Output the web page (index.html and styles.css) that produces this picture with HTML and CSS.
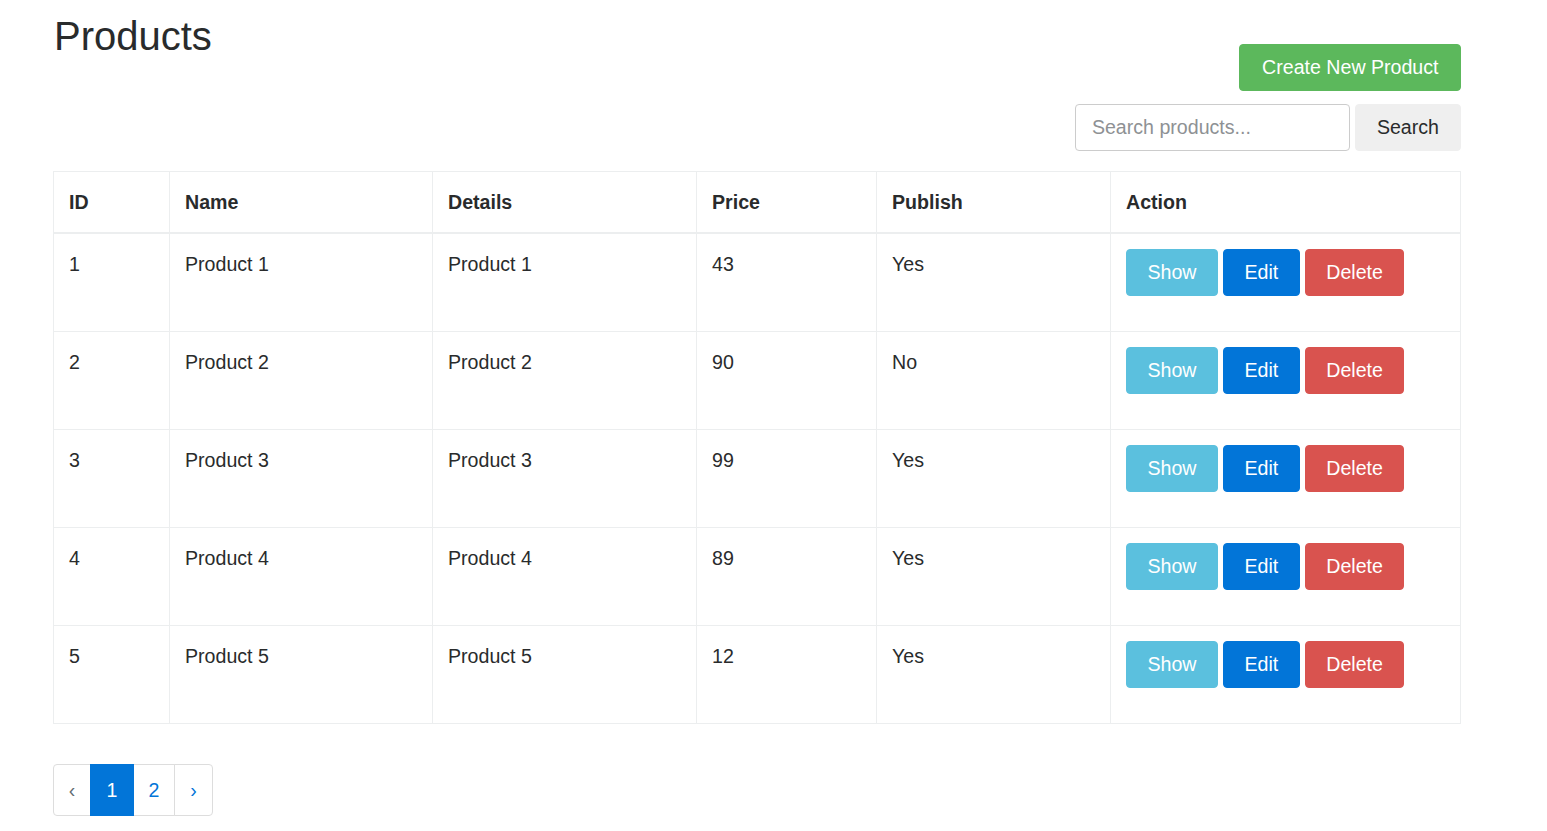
FILE: index.html
```html
<!DOCTYPE html>
<html lang="en">
<head>
<meta charset="utf-8">
<title>Products</title>
<link rel="stylesheet" href="styles.css">
</head>
<body>
<div class="container">
  <div class="page-head">
    <h1 class="title">Products</h1>
    <div class="head-actions">
      <a class="btn btn-success" href="#">Create New Product</a>
      <form class="search">
        <input class="search-input" type="text" placeholder="Search products...">
        <button class="btn btn-secondary" type="button">Search</button>
      </form>
    </div>
  </div>

  <table class="table">
    <colgroup>
      <col class="c-id"><col class="c-name"><col class="c-details"><col class="c-price"><col class="c-publish"><col class="c-action">
    </colgroup>
    <thead>
      <tr><th>ID</th><th>Name</th><th>Details</th><th>Price</th><th>Publish</th><th>Action</th></tr>
    </thead>
    <tbody>
      <tr><td>1</td><td>Product 1</td><td>Product 1</td><td>43</td><td>Yes</td>
        <td><div class="actions"><a class="btn btn-info" href="#">Show</a> <a class="btn btn-primary" href="#">Edit</a> <button class="btn btn-danger" type="button">Delete</button></div></td></tr>
      <tr><td>2</td><td>Product 2</td><td>Product 2</td><td>90</td><td>No</td>
        <td><div class="actions"><a class="btn btn-info" href="#">Show</a> <a class="btn btn-primary" href="#">Edit</a> <button class="btn btn-danger" type="button">Delete</button></div></td></tr>
      <tr><td>3</td><td>Product 3</td><td>Product 3</td><td>99</td><td>Yes</td>
        <td><div class="actions"><a class="btn btn-info" href="#">Show</a> <a class="btn btn-primary" href="#">Edit</a> <button class="btn btn-danger" type="button">Delete</button></div></td></tr>
      <tr><td>4</td><td>Product 4</td><td>Product 4</td><td>89</td><td>Yes</td>
        <td><div class="actions"><a class="btn btn-info" href="#">Show</a> <a class="btn btn-primary" href="#">Edit</a> <button class="btn btn-danger" type="button">Delete</button></div></td></tr>
      <tr><td>5</td><td>Product 5</td><td>Product 5</td><td>12</td><td>Yes</td>
        <td><div class="actions"><a class="btn btn-info" href="#">Show</a> <a class="btn btn-primary" href="#">Edit</a> <button class="btn btn-danger" type="button">Delete</button></div></td></tr>
    </tbody>
  </table>

  <ul class="pagination">
    <li class="page-item disabled"><span class="page-link">&lsaquo;</span></li>
    <li class="page-item active"><span class="page-link">1</span></li>
    <li class="page-item"><a class="page-link" href="#">2</a></li>
    <li class="page-item"><a class="page-link" href="#">&rsaquo;</a></li>
  </ul>
</div>
</body>
</html>
```

FILE: styles.css
```css
* { box-sizing: border-box; }

html, body {
  margin: 0;
  padding: 0;
  background: #fff;
}

body {
  font-family: "Liberation Sans", Arial, Helvetica, sans-serif;
  font-size: 19.6px;
  line-height: 28px;
  color: #292b2c;
}

.container {
  width: 1408px;
  margin-left: 53px;
}

.page-head {
  display: flex;
  justify-content: space-between;
  align-items: flex-start;
}

.title {
  margin: 14px 0 0 1px;
  font-size: 40px;
  font-weight: 500;
  line-height: 44px;
  color: #292b2c;
}

.head-actions {
  display: flex;
  flex-direction: column;
  align-items: flex-end;
  gap: 13px;
  margin-top: 44px;
}

.search {
  display: flex;
  gap: 5px;
  margin: 0;
}

.search-input {
  width: 275px;
  height: 47px;
  padding: 0 16px;
  border: 1px solid #cccccc;
  border-radius: 4px;
  font-family: inherit;
  font-size: 19.6px;
  color: #464a4c;
  outline: none;
}

.search-input::placeholder {
  color: #8e9194;
}

.btn {
  display: inline-block;
  height: 47px;
  padding: 10px 20.5px;
  border: 1px solid transparent;
  border-radius: 4px;
  font-family: inherit;
  font-size: 19.6px;
  line-height: 25px;
  text-decoration: none;
  color: #fff;
  cursor: pointer;
  vertical-align: top;
}

.btn-success { background: #5cb85c; border-color: #5cb85c; padding: 10px 21.5px 10px 22px; }
.btn-secondary { background: #efefef; border-color: #efefef; color: #292b2c; padding: 10px 21px 10px 21px; }
.btn-info { background: #5bc0de; border-color: #5bc0de; }
.btn-primary { background: #0275d8; border-color: #0275d8; }
.btn-danger { background: #d9534f; border-color: #d9534f; }

.table {
  width: 1407px;
  margin-top: 20px;
  border-collapse: collapse;
  table-layout: fixed;
  border: 1px solid #eceeef;
}

.c-id { width: 116px; }
.c-name { width: 263px; }
.c-details { width: 264px; }
.c-price { width: 180px; }
.c-publish { width: 234px; }
.c-action { width: 350px; }

.table th,
.table td {
  border: 1px solid #eceeef;
  padding: 16px 15px 16px 15px;
  text-align: left;
  vertical-align: top;
}

.table th {
  font-weight: bold;
  line-height: 28px;
  border-bottom: 2px solid #eceeef;
}

.table td {
  height: 98px;
}

.actions {
  white-space: nowrap;
  font-size: 0;
  margin-top: -1px;
}

.actions .btn {
  margin-right: 5px;
}

.pagination {
  display: flex;
  list-style: none;
  margin: 40px 0 0 0;
  padding: 0;
}

.page-link {
  display: block;
  height: 52px;
  padding: 12px 16px;
  border: 1px solid #dddddd;
  margin-left: -1px;
  line-height: 26px;
  color: #0275d8;
  text-decoration: none;
  background: #fff;
}

.page-item:first-child .page-link {
  margin-left: 0;
  border-radius: 4px 0 0 4px;
  width: 38px;
  padding: 12px 0;
  text-align: center;
}

.page-item:last-child .page-link {
  border-radius: 0 4px 4px 0;
  width: 39px;
  padding: 12px 0;
  text-align: center;
}

.page-item.disabled .page-link {
  color: #636c72;
}

.page-item.active .page-link {
  background: #0275d8;
  border-color: #0275d8;
  color: #fff;
  position: relative;
  width: 44px;
  text-align: center;
  padding: 12px 0;
}

.page-item:nth-child(3) .page-link {
  width: 42px;
  text-align: center;
  padding: 12px 0;
}
```
